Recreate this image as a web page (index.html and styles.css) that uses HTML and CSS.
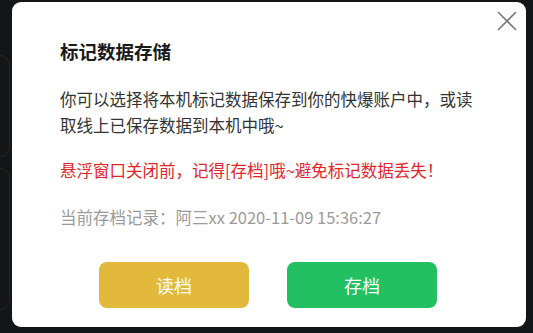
FILE: index.html
```html
<!DOCTYPE html>
<html lang="zh-CN">
<head>
  <meta charset="UTF-8">
  <title>标记数据存储</title>
  <link rel="stylesheet" href="styles.css">
</head>
<body>

<div class="backdrop">
  <div class="deco deco-top"></div>
  <div class="deco deco-bottom"></div>

  <div class="dialog">
    <button class="close" aria-label="关闭">
      <svg width="20" height="20" viewBox="0 0 20 20">
        <path d="M1 1 L19 19 M19 1 L1 19" stroke="#7a7a7a" stroke-width="1.6" fill="none"/>
      </svg>
    </button>

    <h2 class="title">标记数据存储</h2>

    <p class="desc">你可以选择将本机标记数据保存到你的快爆账户中，或读取线上已保存数据到本机中哦~</p>

    <p class="warn">悬浮窗口关闭前，记得[存档]哦~避免标记数据丢失！</p>

    <p class="record">当前存档记录：阿三xx 2020-11-09 15:36:27</p>

    <div class="actions">
      <button class="btn btn-load">读档</button>
      <button class="btn btn-save">存档</button>
    </div>
  </div>
</div>

</body>
</html>
```

FILE: styles.css
```css
body {
  margin: 0;
  background: #131517;
  font-family: "Noto Sans CJK SC", "Noto Sans", sans-serif;
}

.backdrop {
  position: relative;
  width: 533px;
  height: 333px;
  overflow: hidden;
  padding-top: 2px;
  box-sizing: border-box;
}

.deco {
  position: absolute;
  left: -30px;
  width: 38px;
  border: 1px solid #1f2a30;
  border-radius: 10px;
}

.deco-top {
  top: 55px;
  height: 100px;
}

.deco-bottom {
  top: 168px;
  height: 140px;
}

.dialog {
  position: relative;
  margin-left: 12px;
  width: 514px;
  height: 325px;
  box-sizing: border-box;
  padding: 36px 50px 0 48px;
  background: #fff;
  border-radius: 9px;
}

.close {
  position: absolute;
  top: 9px;
  right: 9px;
  padding: 0;
  border: none;
  background: none;
  line-height: 0;
}

.title {
  margin: 0;
  font-size: 18.5px;
  font-weight: bold;
  line-height: 26px;
  color: #1a1a1a;
}

.desc {
  margin: 22px 0 0;
  font-size: 16.5px;
  line-height: 26px;
  color: #333;
}

.warn {
  margin: 20px 0 0;
  font-size: 16.5px;
  line-height: 24px;
  color: #e0262b;
}

.record {
  margin: 23px 0 0;
  font-size: 16.5px;
  line-height: 24px;
  color: #9a9a9a;
}

.actions {
  display: flex;
  justify-content: center;
  gap: 38px;
  margin-top: 33px;
}

.btn {
  width: 150px;
  height: 46px;
  border: none;
  border-radius: 8px;
  font-family: inherit;
  font-size: 18px;
  color: #fff;
}

.btn-load {
  background: #e3b93b;
}

.btn-save {
  background: #22c063;
}
```
